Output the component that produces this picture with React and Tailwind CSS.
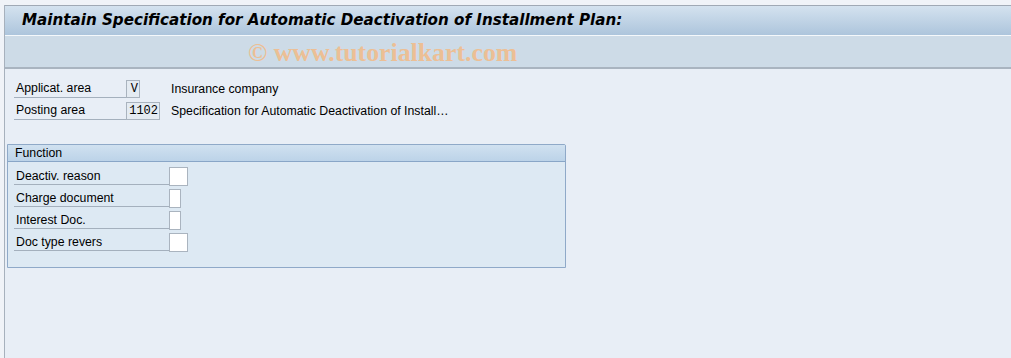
import React from 'react';

const headerRows = [
  { label: 'Applicat. area', value: 'V', width: 'w-[14px]', text: 'Insurance company', gap: 'ml-[31px]' },
  { label: 'Posting area', value: '1102', width: 'w-[34px]', text: 'Specification for Automatic Deactivation of Install…', gap: 'ml-[11px]' },
];

const functionRows = [
  { label: 'Deactiv. reason', width: 'w-[19px]' },
  { label: 'Charge document', width: 'w-[12px]' },
  { label: 'Interest Doc.', width: 'w-[12px]' },
  { label: 'Doc type revers', width: 'w-[19px]' },
];

export default function App() {
  return (
    <div className="w-[1011px] h-[358px] bg-[#f0f3f8] font-['Liberation_Sans',Arial,sans-serif] text-[12.3px] text-black overflow-hidden">
      <div className="h-[5px]" />
      <div className="ml-[4px] border-l border-[#a7b1bd] h-[353px] flex flex-col">
        {/* Title bar */}
        <div className="h-[31px] border-t border-[#a0a9b5] bg-gradient-to-b from-[#d4e2ef] to-[#adc5dc] flex items-center pl-[17px] border-b border-b-[#f4f8fb]">
          <h1 className="font-['Verdana','DejaVu_Sans',sans-serif] font-bold italic text-[15.15px] leading-none">
            Maintain Specification for Automatic Deactivation of Installment Plan:
          </h1>
        </div>

        {/* Toolbar / watermark */}
        <div className="h-[33px] bg-[#cddbe7] border-b-2 border-[#a9b4c0] flex items-center pt-[2px]">
          <span className="ml-[243px] font-['Liberation_Serif',serif] font-bold text-[25.8px] text-[#ecbf95] leading-none">
            © www.tutorialkart.com
          </span>
        </div>

        {/* Content */}
        <div className="flex-1 bg-[#e8eef6] pt-[11px]">
          <div className="flex flex-col gap-[4px] pl-[9px]">
            {headerRows.map((row) => (
              <div key={row.label} className="flex items-center h-[18px]">
                <div className="w-[124px] h-[18px] border-b border-[#a4b0bd] pl-[2px] leading-[17px]">{row.label}</div>
                <div className={`${row.width} h-[18px] -ml-[12px] border border-[#a9b3be] bg-[#e4ebf2] font-['Liberation_Mono',monospace] text-[12px] leading-[16px] text-right pr-[1px]`}>
                  {row.value}
                </div>
                <div className={row.gap}>{row.text}</div>
              </div>
            ))}
          </div>

          {/* Function group */}
          <div className="mt-[24px] ml-[2px] w-[559px] h-[124px] border border-[#8fa9c8] bg-[#dde9f3] rounded-tr-[2px]">
            <div className="h-[17px] bg-gradient-to-b from-[#d0e1f0] to-[#bcd3e8] border-b border-[#89a6c7] pl-[7px] leading-[16px]">
              Function
            </div>
            <div className="flex flex-col gap-[4px] pt-[5px] pl-[6px]">
              {functionRows.map((row) => (
                <div key={row.label} className="flex items-center h-[18px]">
                  <div className="w-[155px] h-[18px] border-b border-[#a4b0bd] pl-[2px] leading-[18px]">{row.label}</div>
                  <div className={`${row.width} h-[19px] border border-[#aab4bf] bg-white`} />
                </div>
              ))}
            </div>
          </div>
        </div>
      </div>
    </div>
  );
}
